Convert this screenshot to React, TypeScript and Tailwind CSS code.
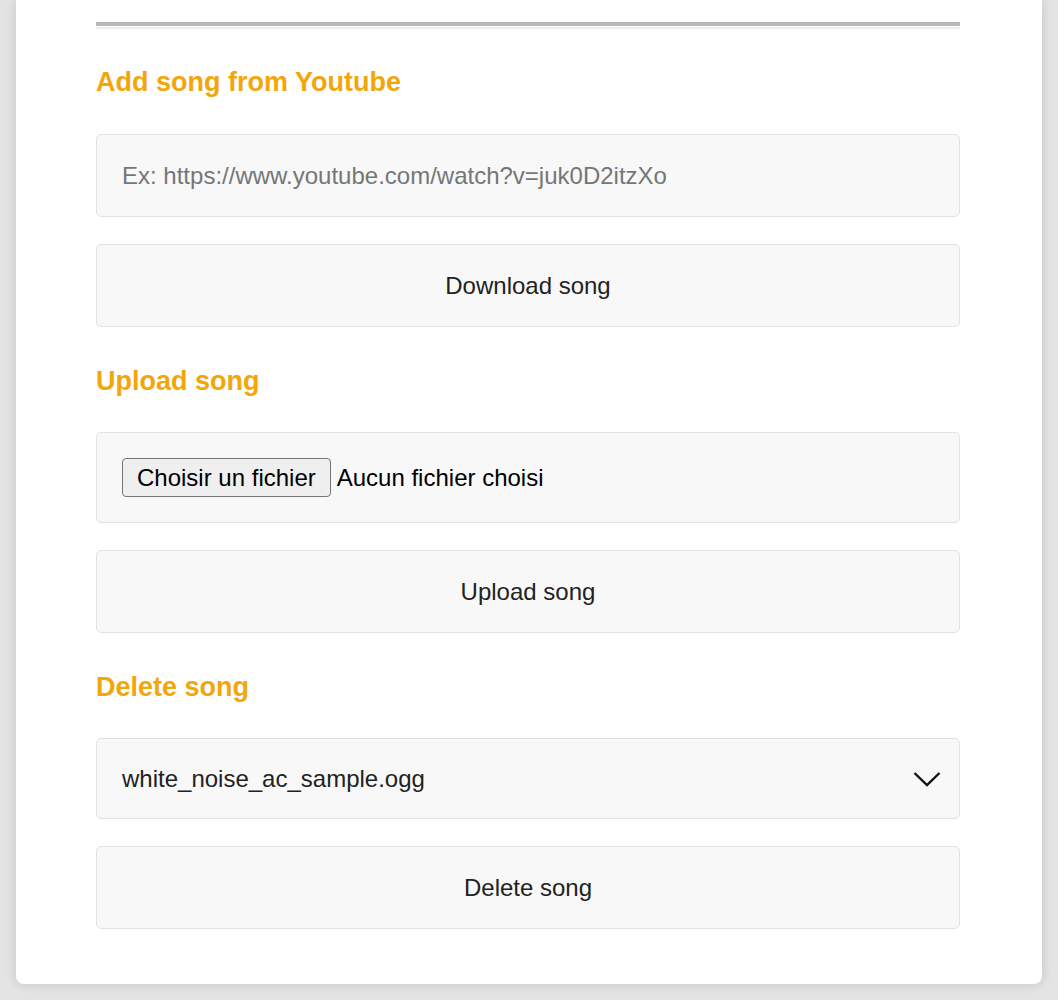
import React from "react";

const font = { fontFamily: '"Liberation Sans", Arial, sans-serif' };

function Heading({ children, className = "" }: { children: React.ReactNode; className?: string }) {
  return (
    <h2 className={`text-[27px] leading-[30px] font-bold text-[#f2a60a] ${className}`}>{children}</h2>
  );
}

function Btn({ children, className = "" }: { children: React.ReactNode; className?: string }) {
  return (
    <button
      type="button"
      className={`w-full h-[83px] rounded-[5px] border border-[#e2e2e2] bg-[#f8f8f8] text-[24px] text-[#222] ${className}`}
    >
      {children}
    </button>
  );
}

export default function App() {
  return (
    <div className="min-h-screen bg-[#e4e4e4] px-[16px] pb-[16px]" style={font}>
      <div className="bg-white rounded-b-[8px] shadow-[0_0_12px_rgba(0,0,0,0.14)] pl-[80px] pr-[82px] pt-[22px] pb-[55px]">
        <div className="h-[4px] bg-[#b8b8b8]" />
        <div className="h-[3px] border-t border-white border-b-2 border-b-[#ececec]" />

        <Heading className="mt-[38px]">Add song from Youtube</Heading>
        <input
          type="text"
          placeholder="Ex: https://www.youtube.com/watch?v=juk0D2itzXo"
          className="mt-[37px] block w-full h-[83px] rounded-[5px] border border-[#e2e2e2] bg-[#f8f8f8] px-[25px] text-[24px] text-[#222] placeholder:text-[#767676] outline-none"
        />
        <Btn className="mt-[27px] block">Download song</Btn>

        <Heading className="mt-[39px]">Upload song</Heading>
        <div className="mt-[36px] h-[91px] rounded-[5px] border border-[#e2e2e2] bg-[#f8f8f8] px-[25px] flex items-center text-[24px] text-black">
          <span className="h-[39px] px-[14px] flex items-center rounded-[4px] border border-[#767676] bg-[#efefef] text-black">
            Choisir un fichier
          </span>
          <span className="ml-[6px]">Aucun fichier choisi</span>
        </div>
        <Btn className="mt-[27px] block">Upload song</Btn>

        <Heading className="mt-[39px]">Delete song</Heading>
        <div className="mt-[36px] h-[81px] rounded-[5px] border border-[#e2e2e2] bg-[#f8f8f8] pl-[25px] pr-[18px] flex items-center justify-between text-[24px] text-[#222]">
          <span>white_noise_ac_sample.ogg</span>
          <svg width="28" height="16" viewBox="0 0 28 16" fill="none">
            <path d="M1.5 2 L14 14 L26.5 2" stroke="#111" strokeWidth="2.4" />
          </svg>
        </div>
        <Btn className="mt-[27px] block">Delete song</Btn>
      </div>
    </div>
  );
}
